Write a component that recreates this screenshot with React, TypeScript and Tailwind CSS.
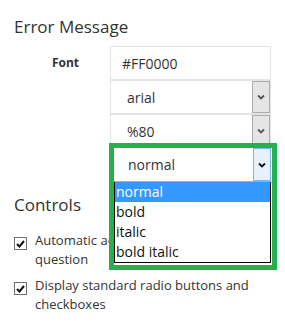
import React from "react"

const font = {fontFamily: '"Open Sans", "Noto Sans", sans-serif'}

function Chevron({className}: {className?: string}) {
    return (
        <svg width="8" height="6" viewBox="0 0 8 6" className={className}>
            <polyline points="1,1.5 4,4.5 7,1.5" fill="none" stroke="currentColor" strokeWidth="1.8"/>
        </svg>
    )
}

function TextField({value}: {value: string}) {
    return (
        <div className="h-[34px] border border-[#e4e4e4] bg-white flex items-center pl-[11px] text-[14px] text-[#333]">
            {value}
        </div>
    )
}

function SelectField({value}: {value: string}) {
    return (
        <div className="h-[34px] border border-[#e4e4e4] bg-white flex items-stretch text-[14px] text-[#333]">
            <div className="flex-1 flex items-center pl-[16px]">{value}</div>
            <div className="w-[18px] border border-[#acacac] bg-[#e5e5e5] flex items-center justify-center text-[#555]">
                <Chevron/>
            </div>
        </div>
    )
}

function CheckRow({label}: {label: string}) {
    return (
        <div className="flex items-start gap-[8px]">
            <span className="mt-[6px] w-[13px] h-[13px] shrink-0 border border-[#707070] bg-white flex items-center justify-center">
                <svg width="9" height="8" viewBox="0 0 9 8">
                    <polyline points="1,4 3.5,6.5 8,1" fill="none" stroke="#111" strokeWidth="2"/>
                </svg>
            </span>
            <span className="w-[240px] text-[13px] leading-[19px] text-[#333]">{label}</span>
        </div>
    )
}

export default function App() {
    const options = ["normal", "bold", "italic", "bold italic"]

    return (
        <div className="relative w-[285px] h-[326px] bg-white overflow-hidden" style={font}>
            <div className="pl-[14px] pt-[15px]">
                <h2 className="text-[17px] leading-[24px] text-[#333]">Error Message</h2>

                <div className="mt-[7px] flex">
                    <div className="w-[65px] h-[34px] flex items-center justify-end text-[12px] font-bold text-[#333]">
                        Font
                    </div>
                    <div className="ml-[31px] w-[161px] flex flex-col">
                        <TextField value="#FF0000"/>
                        <SelectField value="arial"/>
                        <SelectField value="%80"/>
                        <SelectField value="normal"/>
                    </div>
                </div>

                <h2 className="mt-[11px] text-[17px] leading-[24px] text-[#333]">Controls</h2>

                <div className="mt-[14px] flex flex-col gap-[7px]">
                    <CheckRow label="Automatic advance to the next question"/>
                    <CheckRow label="Display standard radio buttons and checkboxes"/>
                </div>
            </div>

            {/* open dropdown, outlined in green */}
            <div className="absolute left-[109px] top-[143px] w-[168px] h-[127px] border-[5px] border-[#22b14c] bg-white">
                <div className="h-[34px] flex items-stretch border-b border-[#9fb4b8] text-[14px] text-[#333]">
                    <div className="flex-1 flex items-center pl-[14px]">normal</div>
                    <div className="w-[18px] mr-[1px] border border-[#7eb4ea] bg-[#e5f1fb] flex items-center justify-center text-[#111]">
                        <Chevron/>
                    </div>
                </div>
                <div className="w-[157px] border-x border-b border-black">
                    {options.map((o, i) => (
                        <div
                            key={o}
                            className={
                                "h-[20px] leading-[20px] pl-[1px] text-[14px] " +
                                (i === 0 ? "bg-[#3399ff] text-white" : "text-[#111]")
                            }
                        >
                            {o}
                        </div>
                    ))}
                </div>
            </div>
        </div>
    )
}
